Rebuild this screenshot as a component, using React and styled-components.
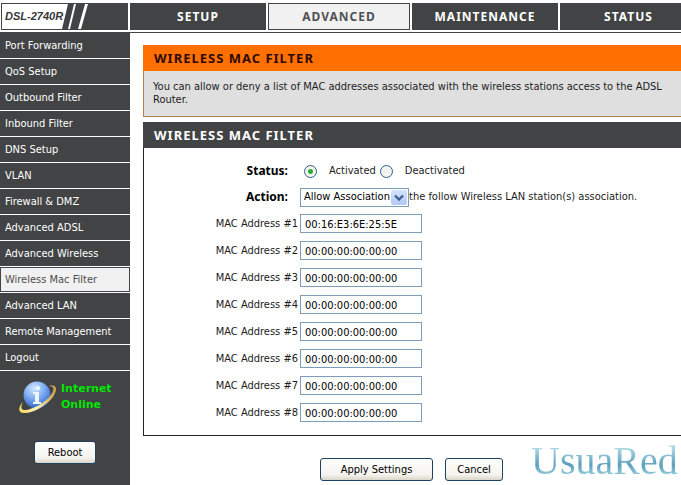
import React, { useState } from "react";
import styled, { createGlobalStyle } from "styled-components";

const dark = "#414344";
const sans = '"DejaVu Sans Condensed", "DejaVu Sans", sans-serif';
const heading = '"Noto Sans", "DejaVu Sans", sans-serif';

const GlobalStyle = createGlobalStyle`
  *, *::before, *::after { box-sizing: border-box; }
  body {
    margin: 0;
    background: #fff;
    color: #1c1c1c;
    font: 11px/14px ${sans};
    overflow: hidden;
  }
  button, input, select { font: inherit; color: #000; }
`;

const Page = styled.div`
  display: flex;
  flex-direction: column;
  width: calc(100% + 16px);
  min-height: 100vh;
`;

const Header = styled.header`
  display: grid;
  grid-template-columns: 127px 1fr;
  gap: 2px;
  padding: 3px 0 2px 1px;
  border-bottom: 1px solid ${dark};
`;

const Model = styled.div`
  display: flex;
  height: 27px;
  background: ${dark};
`;

const TopNav = styled.nav`
  display: grid;
  grid-template-columns: 137fr 143fr 147fr 138fr;
  gap: 2px;
`;

const Tab = styled.a`
  display: flex;
  align-items: center;
  justify-content: center;
  border: 1px solid ${dark};
  background: ${(p) => (p.$active ? "#f1f1f1" : dark)};
  color: ${(p) => (p.$active ? "#505153" : "#fff")};
  font: bold 12px/16px ${heading};
  letter-spacing: 1px;
  text-decoration: none;
`;

const Body = styled.div`
  display: grid;
  grid-template-columns: 130px 1fr;
  flex: 1;
`;

const Sidebar = styled.aside`
  background: ${dark};
`;

const SideItem = styled.div`
  height: 26px;
  border-bottom: 1px solid #fff;
`;

const SideLink = styled.a`
  display: flex;
  align-items: center;
  height: 25px;
  padding: 0 4px;
  border: 1px solid ${dark};
  background: ${(p) => (p.$active ? "#f1f1f1" : dark)};
  color: ${(p) => (p.$active ? "#4c4d4f" : "#fff")};
  text-decoration: none;
`;

const Connection = styled.div`
  display: flex;
  align-items: center;
  gap: 4px;
  padding: 9px 0 0 18px;
  color: #00e600;
  font: bold 11px/16px "DejaVu Sans", sans-serif;
`;

const RebootArea = styled.div`
  display: flex;
  justify-content: center;
  padding-top: 27px;
`;

const Button = styled.button`
  height: 23px;
  width: ${(p) => p.$width}px;
  padding: 0;
  border: 1px solid #1f4260;
  border-radius: 3px;
  background: linear-gradient(#fff, #f4f3ee 75%, #d9d5c9);
`;

const Main = styled.main`
  padding: 12px 0 0 13px;
`;

const Panel = styled.section`
  border: 1px solid ${(p) => (p.$accent ? "#b9804e" : "#242424")};
  border-top: 0;
  margin-bottom: 5px;
  background: ${(p) => (p.$accent ? "#dfdfdf" : "#fff")};
`;

const PanelTitle = styled.h2`
  margin: 0 0 0 -1px;
  padding: 0 11px;
  background: ${(p) => (p.$accent ? "#ff7000" : dark)};
  color: ${(p) => (p.$accent ? "#2c0b00" : "#fff")};
  font: bold 13px/26px ${heading};
  letter-spacing: 1px;
`;

const Intro = styled.p`
  margin: 0;
  padding: 9px 24px 10px 9px;
  line-height: 13px;
`;

const Form = styled.form`
  padding: 10px 0 9px;
`;

const Row = styled.div`
  display: grid;
  grid-template-columns: 154px 1fr;
  column-gap: 2px;
  align-items: center;
  height: ${(p) => (p.$tall ? 27 : 26)}px;
`;

const Caption = styled.span`
  padding-right: 10px;
  color: #000;
  font: bold 12px/16px ${heading};
  text-align: right;
`;

const FieldLabel = styled.label`
  text-align: right;
`;

const Inline = styled.div`
  display: flex;
  align-items: center;
`;

const Radio = styled.input`
  appearance: none;
  width: 13px;
  height: 13px;
  margin: 0 12px 0 4px;
  border: 1px solid #31608a;
  border-radius: 50%;
  background: #f3f3ef;
  &:checked {
    background: radial-gradient(circle, #2bae2b 0 2px, #f3f3ef 3px);
  }
`;

const SelectBox = styled.div`
  display: grid;
  grid-template-columns: 1fr 16px;
  width: 109px;
  height: 19px;
  padding: 1px;
  border: 1px solid #7f9db9;
`;

const Select = styled.select`
  grid-area: 1 / 1 / 2 / 3;
  appearance: none;
  min-width: 0;
  padding: 0 2px;
  border: 0;
  background: none;
`;

const Arrow = styled.svg`
  grid-area: 1 / 2;
  width: 16px;
  height: 15px;
  border-radius: 2px;
  background: linear-gradient(#d5e2fd, #b2c9f6);
  pointer-events: none;
`;

const MacInput = styled.input`
  width: 122px;
  height: 19px;
  padding: 2px 4px 0;
  border: 1px solid #7f9db9;
  background: #fff;
`;

const Footer = styled.footer`
  display: flex;
  align-items: flex-end;
  gap: 12px;
  padding-left: 177px;
`;

const Watermark = styled.span`
  margin-left: 16px;
  background: linear-gradient(#a9d6e2 20%, #5c9fbc 60%, #96ccd9 85%);
  background-clip: text;
  color: transparent;
  font: 40px/40px "Liberation Serif", serif;
`;

const tabs = ["SETUP", "ADVANCED", "MAINTENANCE", "STATUS"];
const links = [
  "Port Forwarding", "QoS Setup", "Outbound Filter", "Inbound Filter", "DNS Setup",
  "VLAN", "Firewall & DMZ", "Advanced ADSL", "Advanced Wireless",
  "Wireless Mac Filter", "Advanced LAN", "Remote Management", "Logout",
];

function ModelBadge() {
  return (
    <svg width="100" height="27" viewBox="0 0 100 27" role="img" aria-label="DSL-2740R">
      <path d="M1 1H67L61 26H1Z M73 1H75L69 26H67Z M84 1H87L80 26H77Z" fill="#fff" />
      <text x="4" y="17" fill="#37393b" fontFamily="Liberation Sans, sans-serif" fontSize="11" fontWeight="bold" fontStyle="italic">DSL-2740R</text>
    </svg>
  );
}

function Globe() {
  return (
    <svg width="39" height="34" viewBox="0 0 39 34" aria-hidden="true">
      <defs>
        <radialGradient id="globe" cx=".4" cy=".25" r=".8">
          <stop offset="0" stopColor="#d3e7ff" />
          <stop offset=".5" stopColor="#78aaf0" />
          <stop offset="1" stopColor="#285abf" />
        </radialGradient>
        <linearGradient id="ring" x1="0" x2="1">
          <stop offset="0" stopColor="#f6d65c" />
          <stop offset=".45" stopColor="#fff3b5" />
          <stop offset="1" stopColor="#c99d48" />
        </linearGradient>
      </defs>
      <circle cx="19" cy="15" r="13.5" fill="url(#globe)" />
      <path d="M18 7a2.2 2.2 0 1 1 3 3a2.2 2.2 0 0 1-3-3M15 12h6v10h2v2h-8v-2h2v-8h-2z" fill="#edf6ff" />
      <path d="M31 6C39 4 40 9 35 17C28 26 14 34 5 33C-1 32 1 26 5 22C2 28 3 30 8 30C15 29 27 23 33 15C37 9 36 6 31 6Z" fill="url(#ring)" />
    </svg>
  );
}

export default function App() {
  const [status, setStatus] = useState("Activated");
  const [macs, setMacs] = useState([
    "00:16:E3:6E:25:5E",
    ...Array(7).fill("00:00:00:00:00:00"),
  ]);

  return (
    <>
      <GlobalStyle />
      <Page>
        <Header>
          <Model><ModelBadge /></Model>
          <TopNav>
            {tabs.map((t) => <Tab key={t} href="#" $active={t === "ADVANCED"}>{t}</Tab>)}
          </TopNav>
        </Header>
        <Body>
          <Sidebar>
            <nav>
              {links.map((l) => (
                <SideItem key={l}>
                  <SideLink href="#" $active={l === "Wireless Mac Filter"}>{l}</SideLink>
                </SideItem>
              ))}
            </nav>
            <Connection><Globe /><span>Internet<br />Online</span></Connection>
            <RebootArea><Button type="button" $width={62}>Reboot</Button></RebootArea>
          </Sidebar>
          <Main>
            <Panel $accent>
              <PanelTitle $accent>WIRELESS MAC FILTER</PanelTitle>
              <Intro>
                You can allow or deny a list of MAC addresses associated with the wireless stations access to the ADSL Router.
              </Intro>
            </Panel>
            <Panel>
              <PanelTitle>WIRELESS MAC FILTER</PanelTitle>
              <Form id="filter" onSubmit={(e) => e.preventDefault()}>
                <Row role="radiogroup" aria-labelledby="status">
                  <Caption id="status">Status:</Caption>
                  <Inline>
                    {["Activated", "Deactivated"].map((s) => (
                      <Inline as="label" key={s}>
                        <Radio type="radio" name="status" checked={status === s} onChange={() => setStatus(s)} />
                        {s}
                      </Inline>
                    ))}
                  </Inline>
                </Row>
                <Row>
                  <Caption as="label" htmlFor="action">Action:</Caption>
                  <Inline>
                    <SelectBox>
                      <Select id="action">
                        <option>Allow Association</option>
                        <option>Deny Association</option>
                      </Select>
                      <Arrow viewBox="0 0 16 15" aria-hidden="true">
                        <path d="M4 5.5l4 4 4-4" fill="none" stroke="#43618f" strokeWidth="2.4" />
                      </Arrow>
                    </SelectBox>
                    <span>the follow Wireless LAN station(s) association.</span>
                  </Inline>
                </Row>
                {macs.map((m, i) => (
                  <Row key={i} $tall>
                    <FieldLabel htmlFor={`mac${i}`}>MAC Address #{i + 1}</FieldLabel>
                    <MacInput
                      id={`mac${i}`}
                      value={m}
                      onChange={(e) => setMacs(macs.map((v, j) => (j === i ? e.target.value : v)))}
                    />
                  </Row>
                ))}
              </Form>
            </Panel>
            <Footer>
              <Button type="submit" form="filter" $width={113}>Apply Settings</Button>
              <Button type="button" $width={58}>Cancel</Button>
              <Watermark>UsuaRed</Watermark>
            </Footer>
          </Main>
        </Body>
      </Page>
    </>
  );
}
